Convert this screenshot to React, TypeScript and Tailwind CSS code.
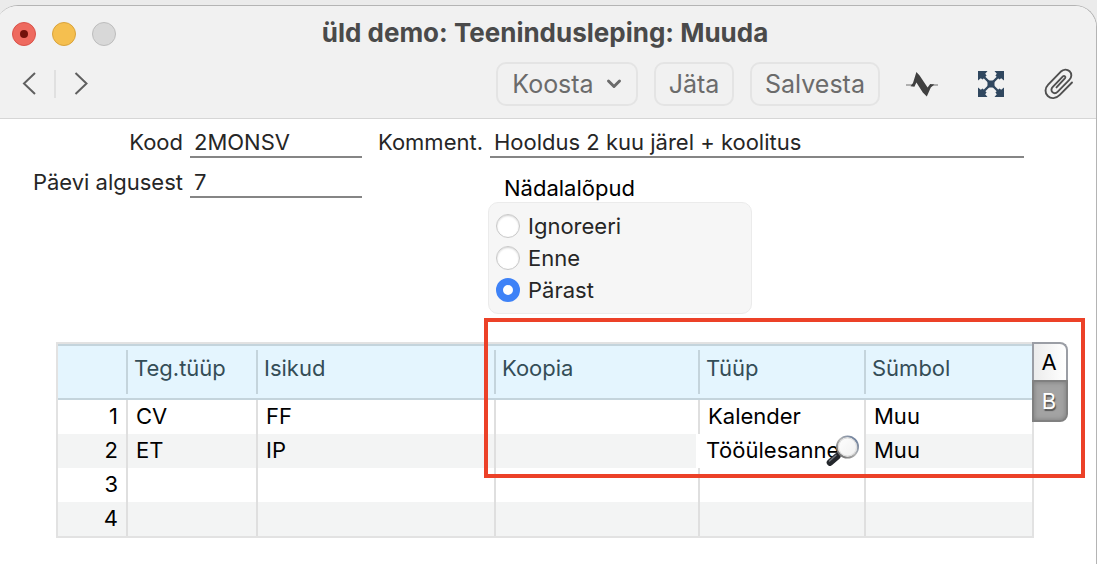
import { useState } from "react";

const WEEKEND_OPTIONS = ["Ignoreeri", "Enne", "Pärast"];

const COLUMNS = [
  { title: "Teg.tüüp", width: "w-[130px]" },
  { title: "Isikud", width: "w-[238px]" },
  { title: "Koopia", width: "w-[204px]" },
  { title: "Tüüp", width: "w-[166px]" },
  { title: "Sümbol", width: "" },
];

const ROWS = [
  ["CV", "FF", "", "Kalender", "Muu"],
  ["ET", "IP", "", "Tööülesanne", "Muu"],
  ["", "", "", "", ""],
  ["", "", "", "", ""],
];

// row / column of the cell that is being edited
const ACTIVE_ROW = 1;
const ACTIVE_COL = 3;

function TrafficLights() {
  return (
    <div className="flex gap-4">
      <button aria-label="Sulge" className="w-6 h-6 rounded-full border border-[#d9534a] bg-[#ee6a5f] flex items-center justify-center">
        <span className="w-2 h-2 rounded-full bg-[#73120b]" />
      </button>
      <button aria-label="Minimeeri" className="w-6 h-6 rounded-full border border-[#d9a33c] bg-[#f5bf4f]" />
      <button aria-label="Suurenda" className="w-6 h-6 rounded-full border border-[#bdbdbd] bg-[#d8d8d8]" />
    </div>
  );
}

function PulseIcon() {
  return (
    <svg className="w-8 h-7" viewBox="0 0 32 28" fill="none">
      <path d="M0 15h6M26 15h6" stroke="#9a9a9a" strokeWidth="1.6" />
      <path d="M4.500 16.300 7 13 10.400 2l3.200 3.500 8 12 2.600-3.500 4.200.4-3.600 3-4 9.200-4-4-6.400-10.200-2 4.400z" fill="#404040" />
    </svg>
  );
}

function ExpandIcon() {
  return (
    <svg className="w-[26px] h-[26px]" viewBox="0 0 26 26" fill="#30475f">
      <path d="M0 0h9.500L7.200 2.800 8.600 4.600 4.600 8.600 2.800 7.200 0 9.500zM26 0h-9.500l2.300 2.800-1.400 1.800 4 4 1.800-1.400L26 9.500zM0 26h9.500l-2.300-2.800 1.400-1.800-4-4-1.800 1.400L0 16.500zM26 26h-9.500l2.300-2.800-1.400-1.800 4-4 1.800 1.400 2.800-2.300z" />
      <path d="M5 5l16 16M21 5 5 21" stroke="#30475f" strokeWidth="2.400" />
      <path d="M9.500 9.500h7v7h-7z" />
    </svg>
  );
}

function ClipIcon() {
  return (
    <svg className="w-[30px] h-8" viewBox="0 0 30 32" fill="none" stroke="#505050" strokeWidth="1.900" strokeLinecap="round" strokeLinejoin="round">
      <path d="M28 14.500 15.800 26.800c-4 4.100-8.800 4.300-12 1.200-3.200-3-3-7.800.4-11.300L16.600 3.800c2.800-2.700 6.600-2.800 9-.5s2.300 5.900-.3 8.600L13.800 23.600c-1.700 1.700-4 1.800-5.400.5s-1.300-3.500.4-5.200L18.900 8.400c1.300-1.200 3.200 0 2.200 1.700L12.500 19.400" />
    </svg>
  );
}

function MagnifierIcon() {
  return (
    <svg className="w-[34px] h-8" viewBox="0 0 34 32" fill="none">
      <defs>
        <linearGradient id="rim" x1="0" y1="1" x2="1" y2="0">
          <stop offset="0" stopColor="#5c5c5c" />
          <stop offset="0.5" stopColor="#b4b4b4" />
          <stop offset="1" stopColor="#5c7397" />
        </linearGradient>
        <linearGradient id="lens" x1="0" y1="0" x2="1" y2="1">
          <stop offset="0" stopColor="#ffffff" />
          <stop offset="1" stopColor="#efefef" />
        </linearGradient>
      </defs>
      <path d="M14 20 10.500 23" stroke="#9a9a9a" strokeWidth="3" />
      <path d="M11.300 22.200 4 28.600" stroke="#24272c" strokeWidth="6.600" strokeLinecap="round" />
      <path d="M10 21.200 3.500 27" stroke="#70747b" strokeWidth="1.400" strokeLinecap="round" />
      <circle cx="21.500" cy="13" r="10.600" fill="url(#lens)" stroke="url(#rim)" strokeWidth="1.800" />
      <circle cx="21.500" cy="13" r="9" stroke="#dcdcdc" strokeWidth="1" />
    </svg>
  );
}

function Field({ id, label, value, labelClass, inputClass }: { id: string; label: string; value: string; labelClass: string; inputClass: string }) {
  return (
    <div className="flex h-8">
      <label htmlFor={id} className={`${labelClass} shrink-0 pr-[7px] text-right leading-8 text-[#262626]`}>
        {label}
      </label>
      <input id={id} defaultValue={value} className={`${inputClass} min-w-0 h-8 pl-1 pt-0.5 border-b-2 border-[#858585] text-[#262626] outline-none`} />
    </div>
  );
}

export default function App() {
  const [weekend, setWeekend] = useState("Pärast");
  const [tab, setTab] = useState("B");

  return (
    <div className="min-h-screen flex flex-col overflow-hidden bg-[#ebebeb] pt-[5px] font-['Inter','Liberation_Sans',sans-serif] text-[22px] leading-8">
      <div className="flex-1 -ml-1 pl-1 border-t border-r border-[#b4b4b4] rounded-t-[22px] bg-white overflow-hidden">
        <header className="-ml-1 pl-4 pr-[22px] bg-[#f1f1f1] border-b border-[#d6d6d6]">
          <div className="flex items-center h-14">
            <TrafficLights />
            <h1 className="flex-1 pr-[100px] pb-0.5 text-center text-[26px] font-bold text-[#4a4a4a]">
              üld demo: Teenindusleping: Muuda
            </h1>
          </div>
          <div className="flex items-center h-14 pb-3 text-[25px] text-[#6b6b6b]">
            <nav className="flex items-center">
              <button aria-label="Eelmine" className="w-8 h-8 flex items-center justify-center">
                <svg className="w-4 h-6" viewBox="0 0 16 24" fill="none" stroke="#606060" strokeWidth="2">
                  <path d="M15 1 4 11.500 15 22" />
                </svg>
              </button>
              <span className="w-0.5 h-7 mx-2.5 bg-[#e0e0e0]" />
              <button aria-label="Järgmine" className="w-8 h-8 flex items-center justify-center">
                <svg className="w-4 h-6" viewBox="0 0 16 24" fill="none" stroke="#606060" strokeWidth="2">
                  <path d="m1.500 1 11 10.500L1.500 22" />
                </svg>
              </button>
            </nav>
            <div className="flex items-center gap-4 ml-auto">
              <button className="flex items-center justify-center gap-3 w-[142px] h-11 border-2 border-[#e4e4e4] rounded-[10px]">
                Koosta
                <svg className="w-4 h-3" viewBox="0 0 16 12" fill="none" stroke="currentColor" strokeWidth="3" strokeLinecap="round" strokeLinejoin="round">
                  <path d="m2.500 3 5.500 5.500L13.500 3" />
                </svg>
              </button>
              <button className="w-20 h-11 border-2 border-[#e4e4e4] rounded-[10px]">Jäta</button>
              <button className="w-[130px] h-11 border-2 border-[#e4e4e4] rounded-[10px]">Salvesta</button>
            </div>
            <div className="flex items-center gap-10 ml-[26px]">
              <button aria-label="Tegevused"><PulseIcon /></button>
              <button aria-label="Töölaud"><ExpandIcon /></button>
              <button aria-label="Manused"><ClipIcon /></button>
            </div>
          </div>
        </header>

        <main className="pt-[7px]">
          <div className="flex">
            <div className="flex flex-col gap-2">
              <Field id="kood" label="Kood" value="2MONSV" labelClass="w-[190px]" inputClass="w-[172px]" />
              <Field id="paevi" label="Päevi algusest" value="7" labelClass="w-[190px]" inputClass="w-[172px]" />
            </div>
            <div className="flex-1 pr-[72px]">
              <Field id="komment" label="Komment." value="Hooldus 2 kuu järel + koolitus" labelClass="w-32" inputClass="flex-1" />
              <fieldset className="ml-[126px] mt-[14px]">
                <legend className="pl-4 h-[30px] text-black">Nädalalõpud</legend>
                <div className="w-[264px] py-[7px] pl-[7px] border border-[#ebebeb] rounded-[10px] bg-[#f6f6f6]">
                  {WEEKEND_OPTIONS.map((option) => (
                    <label key={option} className="flex items-center gap-2 h-8 text-[#262626]">
                      <input
                        type="radio"
                        name="weekend"
                        checked={weekend === option}
                        onChange={() => setWeekend(option)}
                        className="appearance-none w-6 h-6 rounded-full border border-[#c8c8c8] bg-white shadow-[inset_0_1px_2px_#d4d4d4] checked:border-[7px] checked:border-[#3e82f7] checked:shadow-none"
                      />
                      {option}
                    </label>
                  ))}
                </div>
              </fieldset>
            </div>
          </div>

          <div className="relative flex items-start mt-7 pl-14 pr-7">
            <table className="flex-1 table-fixed border-separate border-spacing-0 border-2 border-[#e2e2e2] text-left">
              <thead>
                <tr className="h-14 bg-[#e4f5fe] text-[#344d57]">
                  <th className="w-[68px] p-0 border-y-2 border-[#c4d4dc]" />
                  {COLUMNS.map((col) => (
                    <th key={col.title} className={`${col.width} p-0 border-y-2 border-[#c4d4dc] font-normal`}>
                      <div className="h-11 pl-[6px] leading-[36px] border-l-2 border-[#c4d4dc]">{col.title}</div>
                    </th>
                  ))}
                </tr>
              </thead>
              <tbody className="text-black">
                {ROWS.map((row, r) => (
                  <tr key={r} className="h-[34px] even:bg-[#f3f4f4]">
                    <td className="p-0 pb-0.5 pr-2 text-right">{r + 1}</td>
                    {row.map((value, c) =>
                      r === ACTIVE_ROW && c === ACTIVE_COL ? (
                        <td key={c} className="relative p-0">
                          <input
                            aria-label="Tüüp"
                            defaultValue={value}
                            className="block -ml-0.5 w-[calc(100%+2px)] h-[34px] pl-[10px] pb-0.5 bg-white outline-none"
                          />
                          <button aria-label="Otsi" className="absolute right-1 top-0">
                            <MagnifierIcon />
                          </button>
                        </td>
                      ) : (
                        <td key={c} className="p-0 pb-0.5 pl-2 border-l-2 border-[#dfdfdf]">{value}</td>
                      )
                    )}
                  </tr>
                ))}
              </tbody>
            </table>

            <div className="w-9 -ml-0.5 z-10 flex flex-col">
              {["A", "B"].map((name) => (
                <button
                  key={name}
                  onClick={() => setTab(name)}
                  className={`border-2 pr-0.5 first:rounded-tr-lg last:rounded-br-lg ${
                    tab === name
                      ? "h-[42px] border-[#808080] bg-[#a3a3a3] text-white shadow-[inset_0_0_5px_#7c7c7c] [text-shadow:1px_2px_1px_#555]"
                      : "h-[38px] border-[#9b9ea5] border-b-0 bg-linear-to-r from-[#ececec] to-white text-black"
                  }`}
                >
                  {name}
                </button>
              ))}
            </div>

            <div className="absolute left-[484px] right-[11px] -top-6 h-40 border-4 border-[#ec4128] pointer-events-none" />
          </div>
        </main>
      </div>
    </div>
  );
}
